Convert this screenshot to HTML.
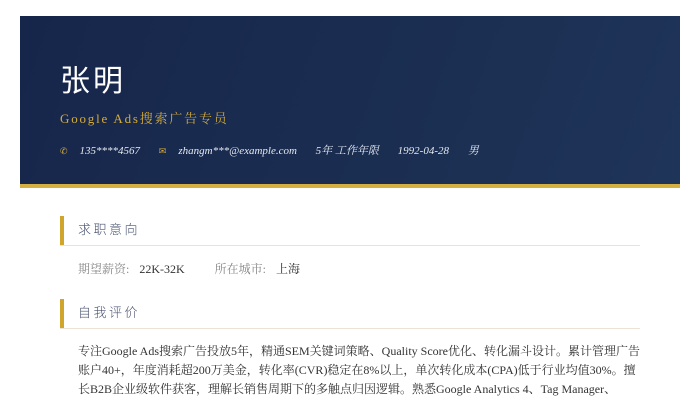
<!DOCTYPE html>
<html><head><meta charset="utf-8"><style>
body{margin:0;background:#fff;width:700px;height:400px;overflow:hidden;font-family:"Liberation Serif","Noto Serif CJK SC",serif;}
.hd{position:absolute;left:20px;top:16px;width:660px;height:168px;background:linear-gradient(110deg,#16264a,#1e3458);border-bottom:4px solid #d4b040;}
.name{position:absolute;left:40px;top:42px;font-size:30px;color:#fff;letter-spacing:3px;line-height:40px;font-family:"Noto Sans CJK SC",sans-serif;font-weight:400}
.title{position:absolute;left:40px;top:92px;font-size:13px;color:#d4aa3a;letter-spacing:1.8px;}
.info{position:absolute;left:40px;top:126px;font-size:11px;color:#e6e9f0;font-style:italic;white-space:nowrap}
.info span{margin-right:16px}
.ic{color:#d4aa3a;font-style:normal;font-size:9px;margin-right:12px!important}
.sec{position:absolute;left:60px;width:580px;height:29px;border-bottom:1px solid #ebe3d6;}
.sec:before{content:"";position:absolute;left:0;top:0;width:4px;height:29px;background:#d0a52c}
.sec div{position:absolute;left:18px;top:3px;font-size:13px;letter-spacing:2.5px;color:#4a5370;font-family:"Noto Sans CJK SC",sans-serif;font-weight:300}
.row{position:absolute;left:78px;top:260px;font-size:12px;color:#333}
.lab{color:#888;margin-right:10px}
.txt{position:absolute;left:78px;top:342px;width:565px;font-size:12px;line-height:19px;color:#333}
</style></head><body>
<div class="hd">
<div class="name">张明</div>
<div class="title">Google Ads搜索广告专员</div>
<div class="info"><span class="ic">✆</span><span>135****4567</span> <span class="ic" style="margin-left:0">✉</span><span>zhangm***@example.com</span> <span>5年 工作年限</span> <span>1992-04-28</span> <span>男</span></div>
</div>
<div class="sec" style="top:216px"><div>求职意向</div></div>
<div class="row"><span class="lab">期望薪资:</span>22K-32K<span class="lab" style="margin-left:30px">所在城市:</span>上海</div>
<div class="sec" style="top:299px"><div>自我评价</div></div>
<div class="txt">专注Google Ads搜索广告投放5年，精通SEM关键词策略、Quality Score优化、转化漏斗设计。累计管理广告账户40+，年度消耗超200万美金，转化率(CVR)稳定在8%以上，单次转化成本(CPA)低于行业均值30%。擅长B2B企业级软件获客，理解长销售周期下的多触点归因逻辑。熟悉Google Analytics 4、Tag Manager、</div>
</body></html>
